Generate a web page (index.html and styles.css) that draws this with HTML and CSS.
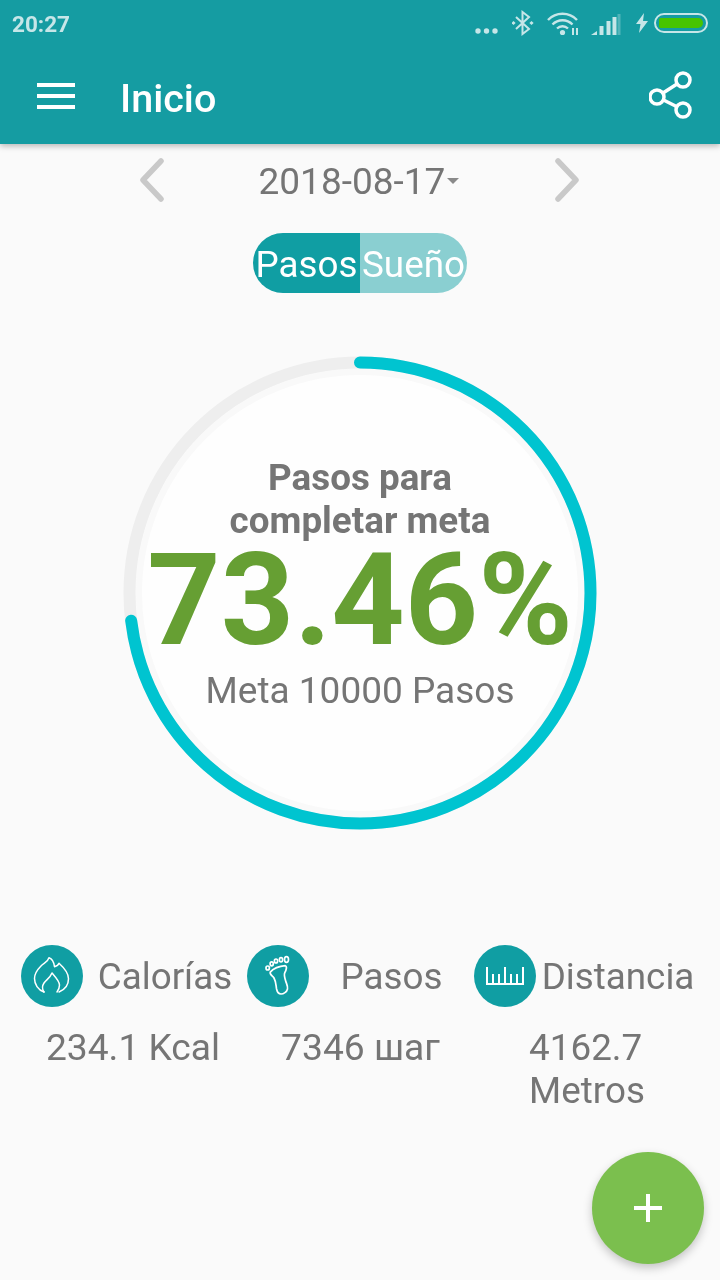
FILE: index.html
```html
<!DOCTYPE html>
<html lang="es">
<head>
<meta charset="utf-8">
<title>Inicio</title>
<link rel="stylesheet" href="styles.css">
</head>
<body>
<div class="screen">
  <header class="appbar">
    <div class="statusbar">
      <span class="time">20:27</span>
      <div class="status-icons">
        <svg class="st-dots" width="23" height="6" viewBox="0 0 23 6"><g fill="#c6e6e8"><circle cx="3" cy="3" r="2.700"/><circle cx="11.500" cy="3" r="2.700"/><circle cx="20" cy="3" r="2.700"/></g></svg>
        <svg class="st-bt" width="22" height="26" viewBox="0 0 22 26"><g fill="none" stroke="#c6e6e8" stroke-width="2"><path d="M4 7l13 12-6.500 5V2l6.500 5L4 19"/></g><g fill="#c6e6e8"><rect x="0" y="11.500" width="3" height="3" transform="rotate(45 1.500 13)"/><rect x="18" y="11.500" width="3" height="3" transform="rotate(45 19.500 13)"/></g></svg>
        <svg class="st-wifi" width="32" height="24" viewBox="0 0 32 24"><g fill="none" stroke="#c6e6e8" stroke-width="2.400"><path d="M1 8a20 20 0 0 1 29 0"/><path d="M5.500 12.500a14 14 0 0 1 20 0"/><path d="M10 16.500a8 8 0 0 1 11 0"/></g><circle cx="15.500" cy="20.500" r="2.600" fill="#c6e6e8"/><g fill="#c6e6e8"><path d="M25 16h2v7h-2zM29 16h2v7h-2z"/></g></svg>
        <svg class="st-signal" width="30" height="21" viewBox="0 0 30 21"><g fill="#c6e6e8"><path d="M0 21l6-4v4z"/><rect x="8.500" y="12" width="4" height="9"/><rect x="15.500" y="7" width="4" height="14"/><rect x="21.500" y="3" width="4" height="18"/></g><rect x="26.500" y="0" width="3" height="21" fill="#c6e6e8" opacity=".35"/></svg>
        <svg class="st-bolt" width="12" height="20" viewBox="0 0 12 20"><path d="M8 0L0 11h4.500L3 20l9-12H7z" fill="#c6e6e8"/></svg>
        <div class="battery"><div class="battery-fill"></div></div>
      </div>
    </div>
    <div class="toolbar">
      <svg class="menu-icon" width="38" height="26" viewBox="0 0 38 26"><g fill="#fff"><rect y="0" width="38" height="4"/><rect y="11" width="38" height="4"/><rect y="22" width="38" height="4"/></g></svg>
      <h1 class="title">Inicio</h1>
      <svg class="share-icon" width="44" height="48" viewBox="0 0 44 48"><g fill="none" stroke="#fff" stroke-width="3.500"><circle cx="34" cy="9" r="7"/><circle cx="8" cy="26" r="7"/><circle cx="34" cy="39" r="7"/><path d="M14 22l14-9M14.500 29l13 6.500"/></g></svg>
    </div>
  </header>

  <main class="content">
    <div class="date-row">
      <svg class="chev" width="26" height="44" viewBox="0 0 26 44"><path d="M22 3L4 22l18 19" fill="none" stroke="#c9c9c9" stroke-width="5.500" stroke-linecap="round" stroke-linejoin="round"/></svg>
      <div class="date">2018-08-17<span class="caret"></span></div>
      <svg class="chev" width="26" height="44" viewBox="0 0 26 44"><path d="M4 3l18 19L4 41" fill="none" stroke="#c9c9c9" stroke-width="5.500" stroke-linecap="round" stroke-linejoin="round"/></svg>
    </div>

    <div class="toggle">
      <span class="tab tab-on">Pasos</span>
      <span class="tab tab-off">Sueño</span>
    </div>

    <section class="ring">
      <svg class="ring-svg" width="480" height="480" viewBox="0 0 480 480">
        <circle cx="240" cy="240" r="221" fill="#fefefe" stroke="#f9f9f9" stroke-width="6"/>
        <circle cx="240" cy="240" r="230.500" fill="none" stroke="#eeeeee" stroke-width="12"/>
        <circle class="ring-progress" cx="240" cy="240" r="230.500" fill="none" stroke="#00c4d0" stroke-width="12" stroke-linecap="round" stroke-dasharray="1058 1448.300" transform="rotate(-90 240 240)"/>
      </svg>
      <div class="ring-text">
        <div class="ring-label">Pasos para<br>completar meta</div>
        <div class="ring-value">73.46%</div>
        <div class="ring-goal">Meta 10000 Pasos</div>
      </div>
    </section>

    <section class="stats">
      <div class="stat">
        <div class="stat-head">
          <span class="stat-icon"><svg width="40" height="40" viewBox="0 0 40 40"><g fill="none" stroke="#fff" stroke-width="1.500" stroke-linejoin="round" stroke-linecap="round"><path d="M12 36C6 34 2.500 28 2.500 22.500c0-5 3-9 6.500-12.500 3-3 7-4 8-8.300 3 1 5 5 5.500 9 2-.5 4-2 4.500-3.500 5 4.500 9.500 9.500 9.500 15.500 0 6.500-4 11-9.500 13.300"/><path d="M12 36c-2-3-2-6 0-9 2.500-3.500 6-5 8-10 3 3.500 7.500 8 7.500 12 0 3-1 5-2.500 7"/></g></svg></span>
          <span class="stat-name">Calorías</span>
        </div>
        <div class="stat-value stat-value-first">234.1 Kcal</div>
      </div>
      <div class="stat">
        <div class="stat-head">
          <span class="stat-icon"><svg width="26" height="42" viewBox="0 0 26 42"><g fill="none" stroke="#fff" stroke-width="1.700"><path d="M5 17.300C9 13 16 11 20.300 10.700c2 .5 1 4-.5 7-1 2-.5 4 .8 8 .8 3 2.500 5.500 1.900 8.300-.7 3-4 5-6.500 5-3 0-4-3-4.500-5.300-.6-4-.5-7-2.500-10.700-1.300-2.300-4.800-3.500-3.700-6z"/><ellipse cx="2.700" cy="13" rx="1.700" ry="2"/><ellipse cx="6.700" cy="8.800" rx="1.600" ry="2"/><ellipse cx="11" cy="6" rx="1.600" ry="2"/><ellipse cx="16" cy="4.800" rx="1.600" ry="2.200"/><ellipse cx="21.500" cy="4.500" rx="2" ry="2.800"/></g></svg></span>
          <span class="stat-name">Pasos</span>
        </div>
        <div class="stat-value">7346 шаг</div>
      </div>
      <div class="stat">
        <div class="stat-head">
          <span class="stat-icon"><svg width="38" height="18" viewBox="0 0 38 18"><path d="M1 0v17h36V0M7 7v10M13 7v10M19 0v17M25 7v10M31 7v10" fill="none" stroke="#fff" stroke-width="2"/></svg></span>
          <span class="stat-name">Distancia</span>
        </div>
        <div class="stat-value stat-value-wrap">4162.7<br>Metros</div>
      </div>
    </section>
  </main>

  <button class="fab" type="button" aria-label="Añadir"><svg width="28" height="28" viewBox="0 0 28 28"><path d="M12 0h4v12h12v4H16v12h-4V16H0v-4h12z" fill="#fff"/></svg></button>
</div>
</body>
</html>
```
FILE: styles.css
```css
* { box-sizing: border-box; }
html, body { margin: 0; padding: 0; }
body { font-family: Roboto, "Noto Sans", sans-serif; background: #fafafa; color: #757575; }
.screen { position: relative; width: 720px; height: 1280px; overflow: hidden; background: #fafafa; }

.appbar { height: 144px; background: #159ca2; box-shadow: 0 2px 6px rgba(0,0,0,.28); position: relative; z-index: 1; }
.statusbar { height: 48px; display: flex; align-items: center; justify-content: space-between; padding: 0 12px 0 12px; }
.time { font-size: 22.500px; font-weight: 700; color: #c6e6e8; }
.status-icons { display: flex; align-items: center; height: 48px; }
.st-dots { margin-top: 14px; margin-right: 14px; }
.st-bt { margin-top: -2px; margin-right: 13px; }
.st-wifi { margin-top: -1px; margin-right: 12px; }
.st-signal { margin-top: 0; margin-right: 15px; }
.st-bolt { margin-top: -2px; margin-right: 6px; }
.battery { width: 54px; height: 20px; margin-top: -2px; padding: 3px; border: 2px solid #c6e6e8; border-radius: 10px; }
.battery-fill { width: 100%; height: 100%; background: #47c400; border-radius: 2px 6px 6px 2px; }

.toolbar { height: 96px; display: flex; align-items: center; padding: 0 28px 0 37px; }
.title { flex: 1; margin: 0 0 0 45px; font-size: 39.500px; font-weight: 500; color: #fff; padding-top: 4px; }
.share-icon { margin-top: -2px; margin-right: -1px; }

.content { display: flex; flex-direction: column; align-items: stretch; will-change: transform; }
.date-row { height: 72px; display: flex; align-items: center; justify-content: center; gap: 93px; padding-right: 2px; }
.date { position: relative; font-size: 37px; color: #757575; width: 203px; white-space: nowrap; padding-top: 2px; margin: 0 -1px 0 1px; }
.caret { position: absolute; top: 20px; left: 188px; width: 0; height: 0; border-left: 6px solid transparent; border-right: 6px solid transparent; border-top: 6px solid #8a8a8a; }

.toggle { align-self: center; display: flex; height: 60px; margin-top: 17px; border-radius: 30px; overflow: hidden; }
.tab { width: 107px; display: flex; align-items: center; justify-content: center; font-size: 36.800px; color: #fff; white-space: nowrap; padding-top: 2px; }
.tab-on { background: #109ea3; }
.tab-off { background: #8acfd1; }

.ring { position: relative; align-self: center; width: 480px; height: 480px; margin-top: 60px; }
.ring-svg { display: block; }
.ring-text { position: absolute; inset: 0; display: flex; flex-direction: column; align-items: center; text-align: center; padding-top: 104px; }
.ring-label { font-size: 36.800px; font-weight: 700; line-height: 42.500px; color: #757575; }
.ring-value { font-size: 128px; font-weight: 700; line-height: 128px; color: #669f33; margin-top: -6px; white-space: nowrap; }
.ring-goal { font-size: 37px; line-height: 44px; color: #757575; margin-top: 5px; }

.stats { display: grid; grid-template-columns: 226px 227px 226px; padding: 0 21px; margin-top: 112px; }
.stat { display: flex; flex-direction: column; align-items: stretch; }
.stat-head { display: flex; align-items: center; height: 62px; }
.stat-icon { flex: none; width: 62px; height: 62px; border-radius: 50%; background: #109ea3; display: flex; align-items: center; justify-content: center; }
.stat-name { flex: 1; text-align: center; font-size: 36.800px; line-height: 44px; color: #757575; white-space: nowrap; padding-top: 1px; }
.stat-value { font-size: 37.200px; line-height: 43px; color: #757575; text-align: center; margin-top: 19px; }
.stat-value-first { padding-right: 2px; }
.stat-value-wrap { align-self: center; text-align: left; font-size: 36.800px; }

.fab { position: absolute; right: 16px; bottom: 16px; width: 112px; height: 112px; border: 0; padding: 0; border-radius: 50%; background: #7bbf4e; box-shadow: 0 4px 10px rgba(0,0,0,.22); display: flex; align-items: center; justify-content: center; }
```
